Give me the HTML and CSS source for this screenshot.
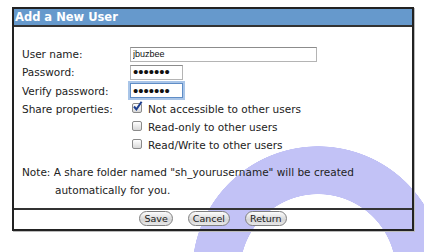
FILE: index.html
```html
<!DOCTYPE html>
<html lang="en">

<head>
    <meta charset="UTF-8">
    <title>Add a New User</title>
    <link rel="stylesheet" href="styles.css">
</head>

<body>
    <div class="panel">
        <div class="panel-title">Add a New User</div>
        <div class="panel-body">
            <label class="field-label" for="user-name">User name:</label>
            <div class="field"><input type="text" id="user-name" class="text-input wide" value="jbuzbee"></div>

            <label class="field-label" for="password">Password:</label>
            <div class="field"><input type="password" id="password" class="text-input short" value="abcdefg"></div>

            <label class="field-label" for="verify-password">Verify password:</label>
            <div class="field"><input type="password" id="verify-password" class="text-input short focused" value="abcdefg"></div>

            <span class="field-label">Share properties:</span>
            <div class="field">
                <span class="check checked">
                    <svg width="11" height="11" viewBox="0 0 11 11"><path d="M2 5.5 L4.4 8.4 L9.6 0.8" fill="none" stroke="#1d3f8f" stroke-width="2"/></svg>
                </span>
                <span class="option-text">Not accessible to other users</span>
            </div>

            <span class="field-label"></span>
            <div class="field">
                <span class="check"></span>
                <span class="option-text">Read-only to other users</span>
            </div>

            <span class="field-label"></span>
            <div class="field">
                <span class="check"></span>
                <span class="option-text">Read/Write to other users</span>
            </div>

            <p class="note">Note: A share folder named "sh_yourusername" will be created automatically for you.</p>
        </div>
        <div class="panel-actions">
            <button class="pill-button">Save</button>
            <button class="pill-button">Cancel</button>
            <button class="pill-button">Return</button>
        </div>
    </div>
</body>

</html>
```

FILE: styles.css
```css
html,
body {
    margin: 0;
    padding: 0;
}

body {
    min-height: 252px;
    font-family: 'DejaVu Sans', sans-serif;
    font-size: 10.5px;
    color: #222;
    /* lavender ring behind the dialog */
    background: radial-gradient(circle at 318px 272px, #fff 0 77.5px, #c2c2f6 78px 125.5px, #fff 126px);
    padding-top: 7px;
}

.panel {
    width: 398px;
    margin-left: 12px;
    border: 2px solid #222;
    box-shadow: 1px 1px 0 #bbb;
}

.panel-title {
    height: 16px;
    line-height: 16px;
    padding-left: 1px;
    background-color: #6699cc;
    border-bottom: 2px solid #333;
    color: #fff;
    font-weight: bold;
    font-size: 11.5px;
}

.panel-body {
    display: grid;
    grid-template-columns: 108px 1fr;
    grid-auto-rows: 18.25px;
    padding: 18px 0 17.25px 8px;
}

.field-label {
    display: flex;
    align-items: center;
}

.field {
    display: flex;
    align-items: center;
}

.text-input {
    box-sizing: border-box;
    height: 15px;
    padding: 0 2px;
    margin: 0;
    border: 1px solid #b4b4b4;
    border-top-color: #8c8c8c;
    background: #fff;
    font-family: 'Liberation Sans', sans-serif;
    font-size: 9px;
    color: #111;
    outline: none;
}

.text-input.wide {
    width: 187px;
}

.text-input.short {
    width: 53px;
    font-size: 15px;
    line-height: 13px;
    padding: 0 2px 1px;
}

.text-input.focused {
    border-color: #5f8dc6;
    box-shadow: 0 0 0 2px #a9c5e8;
}

.check {
    box-sizing: border-box;
    width: 10px;
    height: 10px;
    margin: -2px 6px 0 2px;
    border: 1px solid #8a8a8a;
    border-radius: 2px;
    background: linear-gradient(#fff, #d8d8d8);
    display: flex;
    align-items: center;
    justify-content: center;
}

.check svg {
    flex-shrink: 0;
    margin-top: -3px;
    margin-left: 1px;
}

.note {
    grid-column: 1 / 3;
    grid-row: span 2;
    margin: 8.25px 0 0;
    padding-left: 33px;
    text-indent: -33px;
    line-height: 18.5px;
    width: 352px;
}

.panel-actions {
    display: flex;
    justify-content: center;
    gap: 15px;
    padding: 1px 0 3px;
    border-top: 2px solid #333;
}

.pill-button {
    height: 15px;
    padding: 0 4px;
    min-width: 31px;
    border: 1px solid #808080;
    border-radius: 8px;
    background: linear-gradient(#fdfdfd, #d6d6d6 60%, #e8e8e8);
    font-family: 'DejaVu Sans', sans-serif;
    font-size: 9.5px;
    line-height: 13px;
    color: #1a1a1a;
}
```
